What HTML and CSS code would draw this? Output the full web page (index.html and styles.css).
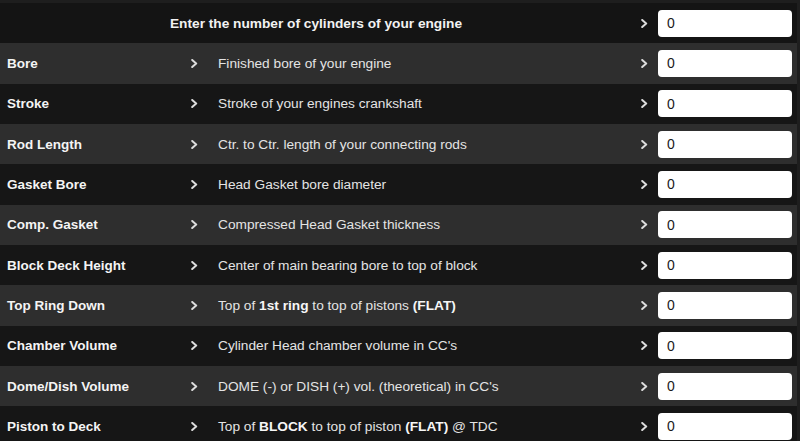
FILE: index.html
```html
<!DOCTYPE html>
<html>
<head>
<meta charset="utf-8">
<link rel="stylesheet" href="styles.css">
</head>
<body>
<div class="calc">
  <div class="row head">
    <div class="title">Enter the number of cylinders of your engine</div>
    <div class="chev"><svg viewBox="0 0 7 9" width="7" height="9"><polyline points="1.2,1 5.2,4.5 1.2,8"/></svg></div>
    <div class="field"><input class="inp" type="text" value="0"></div>
  </div>
  <div class="row light">
    <div class="label">Bore</div>
    <div class="chev"><svg viewBox="0 0 7 9" width="7" height="9"><polyline points="1.2,1 5.2,4.5 1.2,8"/></svg></div>
    <div class="desc">Finished bore of your engine</div>
    <div class="chev"><svg viewBox="0 0 7 9" width="7" height="9"><polyline points="1.2,1 5.2,4.5 1.2,8"/></svg></div>
    <div class="field"><input class="inp" type="text" value="0"></div>
  </div>
  <div class="row dark">
    <div class="label">Stroke</div>
    <div class="chev"><svg viewBox="0 0 7 9" width="7" height="9"><polyline points="1.2,1 5.2,4.5 1.2,8"/></svg></div>
    <div class="desc">Stroke of your engines crankshaft</div>
    <div class="chev"><svg viewBox="0 0 7 9" width="7" height="9"><polyline points="1.2,1 5.2,4.5 1.2,8"/></svg></div>
    <div class="field"><input class="inp" type="text" value="0"></div>
  </div>
  <div class="row light">
    <div class="label">Rod Length</div>
    <div class="chev"><svg viewBox="0 0 7 9" width="7" height="9"><polyline points="1.2,1 5.2,4.5 1.2,8"/></svg></div>
    <div class="desc">Ctr. to Ctr. length of your connecting rods</div>
    <div class="chev"><svg viewBox="0 0 7 9" width="7" height="9"><polyline points="1.2,1 5.2,4.5 1.2,8"/></svg></div>
    <div class="field"><input class="inp" type="text" value="0"></div>
  </div>
  <div class="row dark">
    <div class="label">Gasket Bore</div>
    <div class="chev"><svg viewBox="0 0 7 9" width="7" height="9"><polyline points="1.2,1 5.2,4.5 1.2,8"/></svg></div>
    <div class="desc">Head Gasket bore diameter</div>
    <div class="chev"><svg viewBox="0 0 7 9" width="7" height="9"><polyline points="1.2,1 5.2,4.5 1.2,8"/></svg></div>
    <div class="field"><input class="inp" type="text" value="0"></div>
  </div>
  <div class="row light">
    <div class="label">Comp. Gasket</div>
    <div class="chev"><svg viewBox="0 0 7 9" width="7" height="9"><polyline points="1.2,1 5.2,4.5 1.2,8"/></svg></div>
    <div class="desc">Compressed Head Gasket thickness</div>
    <div class="chev"><svg viewBox="0 0 7 9" width="7" height="9"><polyline points="1.2,1 5.2,4.5 1.2,8"/></svg></div>
    <div class="field"><input class="inp" type="text" value="0"></div>
  </div>
  <div class="row dark">
    <div class="label">Block Deck Height</div>
    <div class="chev"><svg viewBox="0 0 7 9" width="7" height="9"><polyline points="1.2,1 5.2,4.5 1.2,8"/></svg></div>
    <div class="desc">Center of main bearing bore to top of block</div>
    <div class="chev"><svg viewBox="0 0 7 9" width="7" height="9"><polyline points="1.2,1 5.2,4.5 1.2,8"/></svg></div>
    <div class="field"><input class="inp" type="text" value="0"></div>
  </div>
  <div class="row light">
    <div class="label">Top Ring Down</div>
    <div class="chev"><svg viewBox="0 0 7 9" width="7" height="9"><polyline points="1.2,1 5.2,4.5 1.2,8"/></svg></div>
    <div class="desc">Top of <b>1st ring</b> to top of pistons <b>(FLAT)</b></div>
    <div class="chev"><svg viewBox="0 0 7 9" width="7" height="9"><polyline points="1.2,1 5.2,4.5 1.2,8"/></svg></div>
    <div class="field"><input class="inp" type="text" value="0"></div>
  </div>
  <div class="row dark">
    <div class="label">Chamber Volume</div>
    <div class="chev"><svg viewBox="0 0 7 9" width="7" height="9"><polyline points="1.2,1 5.2,4.5 1.2,8"/></svg></div>
    <div class="desc">Cylinder Head chamber volume in CC's</div>
    <div class="chev"><svg viewBox="0 0 7 9" width="7" height="9"><polyline points="1.2,1 5.2,4.5 1.2,8"/></svg></div>
    <div class="field"><input class="inp" type="text" value="0"></div>
  </div>
  <div class="row light">
    <div class="label">Dome/Dish Volume</div>
    <div class="chev"><svg viewBox="0 0 7 9" width="7" height="9"><polyline points="1.2,1 5.2,4.5 1.2,8"/></svg></div>
    <div class="desc">DOME (-) or DISH (+) vol. (theoretical) in CC's</div>
    <div class="chev"><svg viewBox="0 0 7 9" width="7" height="9"><polyline points="1.2,1 5.2,4.5 1.2,8"/></svg></div>
    <div class="field"><input class="inp" type="text" value="0"></div>
  </div>
  <div class="row dark">
    <div class="label">Piston to Deck</div>
    <div class="chev"><svg viewBox="0 0 7 9" width="7" height="9"><polyline points="1.2,1 5.2,4.5 1.2,8"/></svg></div>
    <div class="desc">Top of <b>BLOCK</b> to top of piston <b>(FLAT)</b> @ TDC</div>
    <div class="chev"><svg viewBox="0 0 7 9" width="7" height="9"><polyline points="1.2,1 5.2,4.5 1.2,8"/></svg></div>
    <div class="field"><input class="inp" type="text" value="0"></div>
  </div>
</div>
</body>
</html>
```

FILE: styles.css
```css
html, body {
  margin: 0;
  padding: 0;
  background: #1e1e1e;
  overflow: hidden;
}
body {
  font-family: "Liberation Sans", Arial, sans-serif;
  font-size: 13.7px;
  color: #e6e6e6;
}
.calc {
  width: 797px;
  padding-top: 3px;
}
.row {
  display: grid;
  grid-template-columns: 186px 25px 425px 17px 144px;
  align-items: center;
  height: 40.34px;
}
.head { background: #141414; }
.light { background: #2e2e2e; }
.dark { background: #161616; }
.title {
  grid-column: 1 / 4;
  text-align: center;
  padding-right: 4px;
  font-weight: bold;
  color: #f2f2f2;
}
.label {
  padding-left: 7px;
  font-size: 13.5px;
  font-weight: bold;
  color: #f4f4f4;
}
.desc {
  padding-left: 7px;
  color: #e4e4e4;
}
.desc b { color: #f6f6f6; }
.chev {
  display: flex;
  align-items: center;
  padding-left: 5px;
}
.chev svg polyline {
  fill: none;
  stroke: #dcdcdc;
  stroke-width: 2;
  stroke-linecap: round;
  stroke-linejoin: round;
}
.field {
  display: flex;
  align-items: center;
  padding-left: 5px;
}
.inp {
  box-sizing: border-box;
  width: 134px;
  height: 27px;
  border: none;
  border-radius: 4px;
  background: #fff;
  padding: 0 9px;
  font-family: "Liberation Sans", Arial, sans-serif;
  font-size: 14px;
  color: #1a1a1a;
  outline: none;
}
```
